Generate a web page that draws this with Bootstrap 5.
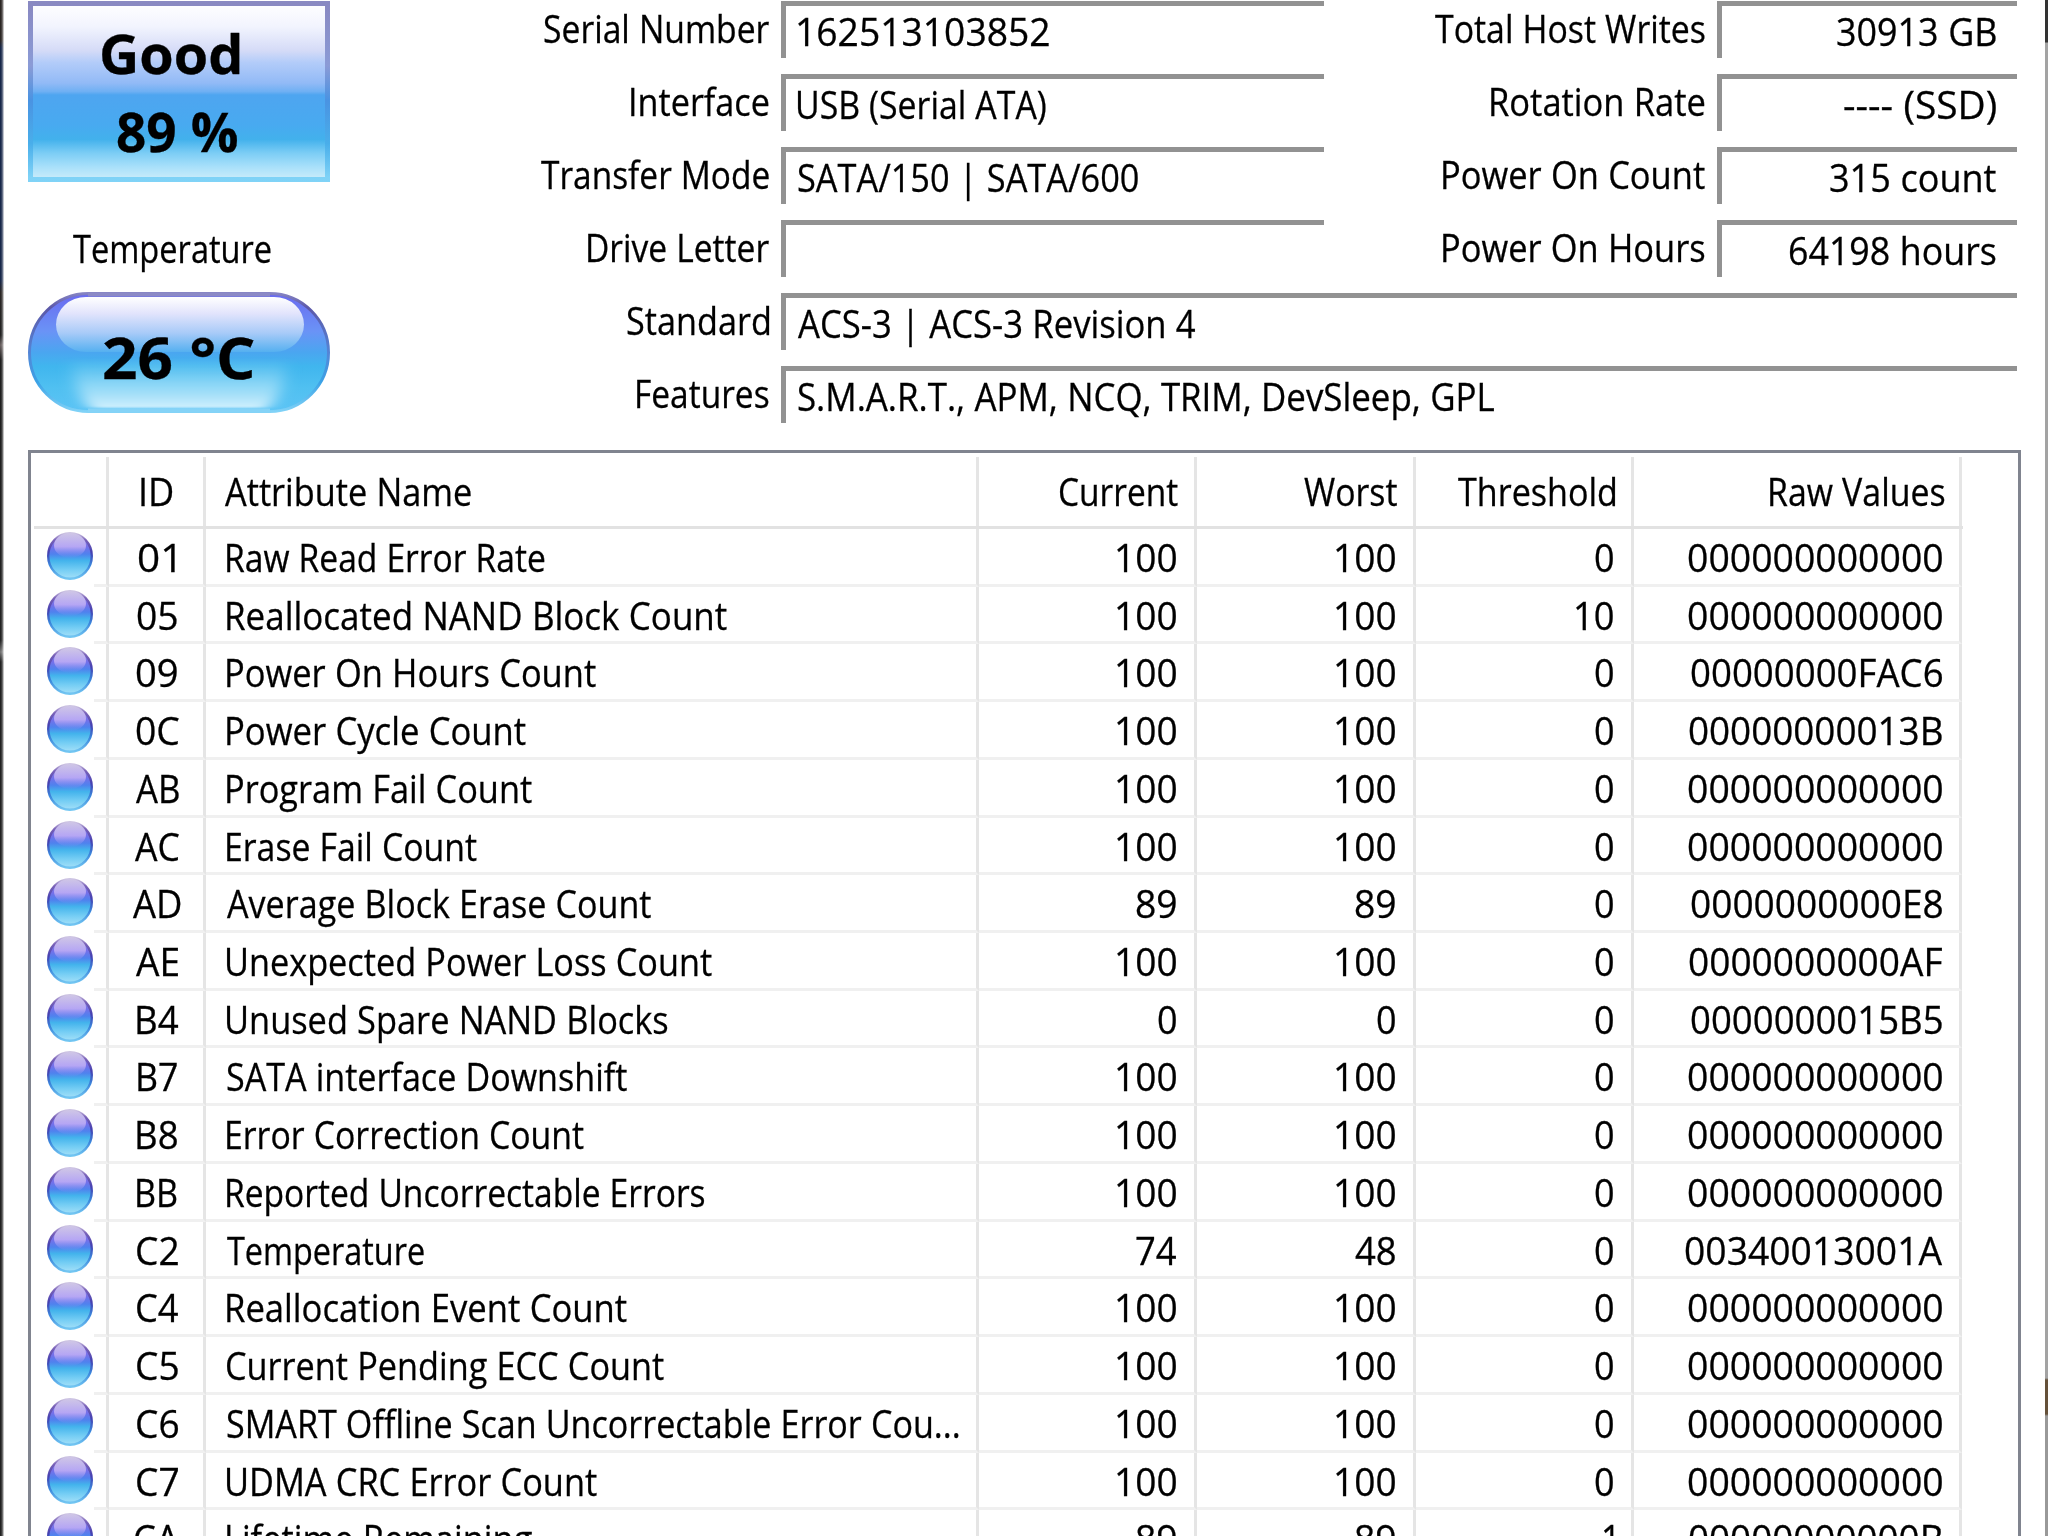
<!DOCTYPE html>
<html lang="en">
<head>
<meta charset="utf-8">
<title>Drive health</title>
<link rel="stylesheet" href="https://cdn.jsdelivr.net/npm/bootstrap@5.3.0/dist/css/bootstrap.min.css">
<style>
  html, body { height: 1536px; overflow: hidden; }
  body { width: 2048px; background: #fff; color: #000; font-family: "Open Sans", "Noto Sans", sans-serif; font-size: 38px; line-height: 55px; }
  .edge-l { width: 4px; background: linear-gradient(90deg, transparent 0 1px, rgba(255,255,255,.45) 3px, #fff 4px), linear-gradient(#2b2624 0, #2b2624 40px, #18284a 48px, #18284a 280px, #2b2726 292px, #222 335px, #6b6262 345px, #1f1f1f 360px, #222 640px, #777 652px, #222 662px); }
  .edge-r { width: 3px; background: linear-gradient(#333 0, #333 42px, #a3a3a3 43px, #a3a3a3 1378px, #65513a 1380px, #65513a 1414px, #999 1416px); }
  .txt { display: inline-block; white-space: nowrap; transform-origin: 0 50%; word-spacing: .3px; -webkit-text-stroke: .3px #000; }
  .summary { height: 450px; padding-left: 24px; }
  .status { width: 302px; }
  .health { height: 181px; margin-top: 1px; border: 5px solid; border-image: linear-gradient(#8989c2, #8b9bd6 35%, #4a93e2 55%, #49aeea 80%, #80d3f7) 1; font-size: 54px; font-weight: 700;
    background: linear-gradient(#fdfdff 0, #f2f4fe 12%, #d5dbf7 26%, #b3ccf9 33%, #92baf6 45%, #6fb0f3 50%, #4ea5f0 52%, #48aaf0 70%, #42b1ec 78%, #7ccdf5 86%, #a8e0fa 94%, #c5eafa 100%); }
  .health div { height: 79px; line-height: 79px; }
  .health div:first-child { padding: 8px 17px 0 0; }
  .health div:last-child { padding: 7px 4px 0 0; }
  .tlabel { height: 55px; margin-top: 37px; line-height: 55px; padding: 2px 14px 0 0; }
  .pill { height: 122px; margin-top: 18px; font-size: 57px; font-weight: 700; line-height: 130px; }
  .pill svg { inset: 0; }
  .info { width: 1505px; margin-left: 182px; }
  .info > div { height: 73px; }
  .cap { height: 58px; text-align: right; padding: 1px 12px 0 0; line-height: 55px; }
  .cap-a { width: 269px; }
  .cap-b { width: 393px; }
  .field { height: 57px; margin-top: 1px; border-top: 5px solid #929292; border-left: 5px solid #929292; line-height: 51px; padding: 0 21px 0 12px; }
  .field-m { width: 543px; }
  .attrs { width: 1993px; height: 1100px; margin-left: 24px; border: 3px solid #80848f; border-bottom: 0; }
  .line { height: 57.73px; width: 1932px; line-height: 56.6px; }
  .line > div, .head-line > div { flex-shrink: 0; }
  .line > div { border-right: 3px solid #e5e5e5; border-bottom: 3px solid #f0f0f0; }
  .line > .ball { border: 0; width: 63px; padding-left: 16px; line-height: 0; padding-top: 3px; }
  .head-line { height: 76px; padding-top: 4px; line-height: 68px; border-bottom: 3px solid #e2e2e2; margin-left: 3px; width: 1929px; }
  .head-line > div { border-right: 3px solid #e5e5e5; }
  .c-pad { width: 15px; }
  .head-line .c-pad { width: 75px; }
  .c-id { width: 97px; text-align: center; padding-left: 2px; }
  .c-name { width: 772.5px; padding-left: 21px; }
  .head-line .c-name { padding-left: 19px; }
  .c-num { width: 218.6px; text-align: right; padding-right: 18px; }
  .c-raw { width: 328px; text-align: right; padding-right: 17px; }
  .head-line .c-num { padding-right: 16px; }
  .head-line .c-raw { padding-right: 15px; }
</style>
<script src="https://cdn.jsdelivr.net/npm/bootstrap@5.3.0/dist/js/bootstrap.bundle.min.js"></script>
</head>
<body class="d-flex">
<svg width="0" height="0" class="position-absolute">
  <defs>
    <linearGradient id="orb" x1="0" y1="0" x2="0" y2="1"><stop offset="0" stop-color="#9c8ce0"/><stop offset=".3" stop-color="#7570ea"/><stop offset=".46" stop-color="#4f82ee"/><stop offset=".6" stop-color="#43b3ec"/><stop offset=".8" stop-color="#74cdf4"/><stop offset="1" stop-color="#a4e0f8"/></linearGradient>
    <linearGradient id="orbRim" x1="0" y1="0" x2="0" y2="1"><stop offset="0" stop-color="#cdc4e2"/><stop offset=".15" stop-color="#7a62b8"/><stop offset=".42" stop-color="#4540b0"/><stop offset=".7" stop-color="#3a86dc"/><stop offset="1" stop-color="#72c6f2"/></linearGradient>
    <linearGradient id="orbShine" x1="0" y1="0" x2="0" y2="1"><stop offset="0" stop-color="#cfc6e6"/><stop offset=".55" stop-color="#b5a6f4"/><stop offset="1" stop-color="#7f90f4" stop-opacity="0"/></linearGradient>
    <symbol id="ball" viewBox="0 0 46 48"><ellipse cx="23" cy="24" rx="21.8" ry="22.8" fill="url(#orb)" stroke="url(#orbRim)" stroke-width="2.4"/><ellipse cx="23" cy="13.500" rx="16" ry="12.500" fill="url(#orbShine)"/></symbol>
  </defs>
</svg>
<div class="edge-l flex-shrink-0"></div>
<main class="flex-grow-1 overflow-hidden">
  <section class="summary d-flex">
    <div class="status text-center">
      <div class="health"><div><span class="txt" data-w="137">Good</span></div><div><span class="txt" data-w="120">89 %</span></div></div>
      <div class="tlabel"><span class="txt" data-w="198">Temperature</span></div>
      <div class="pill position-relative">
        <svg class="position-absolute" width="302" height="122" viewBox="0 0 302 122">
          <defs>
            <linearGradient id="pb" x1="0" y1="0" x2="0" y2="1"><stop offset="0" stop-color="#6a6af0"/><stop offset=".32" stop-color="#6a93f6"/><stop offset=".5" stop-color="#4aa6f0"/><stop offset=".62" stop-color="#40b6ee"/><stop offset=".8" stop-color="#50c0f1"/><stop offset="1" stop-color="#5cc4f5"/></linearGradient>
            <linearGradient id="pr" x1="0" y1="0" x2="0" y2="1"><stop offset="0" stop-color="#8583c2"/><stop offset=".12" stop-color="#5c58a8"/><stop offset=".5" stop-color="#5485d6"/><stop offset=".75" stop-color="#3ba2e6"/><stop offset="1" stop-color="#80d2f7"/></linearGradient>
            <linearGradient id="ps" x1="0" y1="0" x2="0" y2="1"><stop offset="0" stop-color="#fff"/><stop offset=".3" stop-color="#e2e4fc"/><stop offset=".65" stop-color="#a9cbf8"/><stop offset="1" stop-color="#55b0f0"/></linearGradient>
            <linearGradient id="pg" x1="0" y1="0" x2="0" y2="1"><stop offset="0" stop-color="#90d8f6" stop-opacity="0"/><stop offset=".5" stop-color="#a0def8" stop-opacity=".7"/><stop offset="1" stop-color="#d0f0fd"/></linearGradient>
            <filter id="soft" x="-20%" y="-30%" width="140%" height="160%"><feGaussianBlur stdDeviation="8 1"/></filter>
          </defs>
          <rect x="1.5" y="1.5" width="299" height="118" rx="59" fill="url(#pb)" stroke="url(#pr)" stroke-width="3"/>
          <path d="M44 66H258C258 92 245 116 236 116H66C57 116 44 92 44 66Z" fill="url(#pg)" filter="url(#soft)"/>
          <path d="M60 2.500H242" stroke="#8c8ac6" stroke-width="4"/>
          <path d="M60 118.500H242" stroke="#85d3f7" stroke-width="4"/>
          <rect x="28" y="5" width="248" height="55" rx="30" ry="27.500" fill="url(#ps)"/>
        </svg>
        <span class="txt position-relative" data-w="150">26 °C</span>
      </div>
    </div>
    <div class="info">
      <div class="d-flex"><div class="cap cap-a"><span class="txt" data-w="225">Serial Number</span></div><div class="field field-m"><span class="txt" data-w="251">162513103852</span></div><div class="cap cap-b"><span class="txt" data-w="270">Total Host Writes</span></div><div class="field flex-grow-1 text-end"><span class="txt" data-w="159">30913 GB</span></div></div>
      <div class="d-flex"><div class="cap cap-a"><span class="txt" data-w="138">Interface</span></div><div class="field field-m"><span class="txt" data-w="248">USB (Serial ATA)</span></div><div class="cap cap-b"><span class="txt" data-w="214">Rotation Rate</span></div><div class="field flex-grow-1 text-end"><span class="txt" data-w="152">---- (SSD)</span></div></div>
      <div class="d-flex"><div class="cap cap-a"><span class="txt" data-w="228">Transfer Mode</span></div><div class="field field-m"><span class="txt" data-w="340">SATA/150 | SATA/600</span></div><div class="cap cap-b"><span class="txt" data-w="262">Power On Count</span></div><div class="field flex-grow-1 text-end"><span class="txt" data-w="166">315 count</span></div></div>
      <div class="d-flex"><div class="cap cap-a"><span class="txt" data-w="181">Drive Letter</span></div><div class="field field-m"></div><div class="cap cap-b"><span class="txt" data-w="262">Power On Hours</span></div><div class="field flex-grow-1 text-end"><span class="txt" data-w="206">64198 hours</span></div></div>
      <div class="d-flex"><div class="cap cap-a"><span class="txt" data-w="142">Standard</span></div><div class="field flex-grow-1"><span class="txt" data-w="397">ACS-3 | ACS-3 Revision 4</span></div></div>
      <div class="d-flex"><div class="cap cap-a"><span class="txt" data-w="132">Features</span></div><div class="field flex-grow-1"><span class="txt" data-w="696">S.M.A.R.T., APM, NCQ, TRIM, DevSleep, GPL</span></div></div>
    </div>
  </section>
  <section class="attrs" id="attrs">
    <div class="head-line d-flex"><div class="c-pad"></div><div class="c-id"><span class="txt" data-w="32">ID</span></div><div class="c-name"><span class="txt" data-w="246">Attribute Name</span></div><div class="c-num"><span class="txt" data-w="118">Current</span></div><div class="c-num"><span class="txt" data-w="93">Worst</span></div><div class="c-num"><span class="txt" data-w="157">Threshold</span></div><div class="c-raw"><span class="txt" data-w="175">Raw Values</span></div></div>
  </section>
</main>
<div class="edge-r flex-shrink-0"></div>
<script>
  // id, name, name width, current, worst, threshold, raw value, raw width
  const rows = [
    ["01","Raw Read Error Rate",318,100,100,0,"000000000000",254],
    ["05","Reallocated NAND Block Count",500,100,100,10,"000000000000",254],
    ["09","Power On Hours Count",369,100,100,0,"00000000FAC6",251],
    ["0C","Power Cycle Count",299,100,100,0,"00000000013B",253],
    ["AB","Program Fail Count",305,100,100,0,"000000000000",254],
    ["AC","Erase Fail Count",250,100,100,0,"000000000000",254],
    ["AD","Average Block Erase Count",424,89,89,0,"0000000000E8",251],
    ["AE","Unexpected Power Loss Count",485,100,100,0,"0000000000AF",253],
    ["B4","Unused Spare NAND Blocks",441,0,0,0,"0000000015B5",251],
    ["B7","SATA interface Downshift",400,100,100,0,"000000000000",254],
    ["B8","Error Correction Count",357,100,100,0,"000000000000",254],
    ["BB","Reported Uncorrectable Errors",478,100,100,0,"000000000000",254],
    ["C2","Temperature",197,74,48,0,"00340013001A",257],
    ["C4","Reallocation Event Count",400,100,100,0,"000000000000",254],
    ["C5","Current Pending ECC Count",437,100,100,0,"000000000000",254],
    ["C6","SMART Offline Scan Uncorrectable Error Cou...",732,100,100,0,"000000000000",254],
    ["C7","UDMA CRC Error Count",370,100,100,0,"000000000000",254],
    ["CA","Lifetime Remaining",305,89,89,1,"00000000000B",253]
  ];
  const idW = { "01":37,"05":40,"09":41,"0C":43,"AB":43,"AC":44,"AD":48,"AE":42,"B4":41,"B7":39,"B8":40,"BB":40,"C2":41,"C4":41,"C5":41,"C6":41,"C7":41,"CA":44 };
  const numW = v => ({ 1: v === 1 ? 10 : 18, 2: v === 10 ? 37 : 40, 3: 59 })[String(v).length];
  const cell = (cls, text, w) => `<div class="${cls}"><span class="txt" data-w="${w}">${text}</span></div>`;
  document.getElementById("attrs").insertAdjacentHTML("beforeend", rows.map(r =>
    `<div class="line d-flex"><div class="ball"><svg width="46" height="48"><use href="#ball"/></svg></div><div class="c-pad"></div>` +
    cell("c-id", r[0], idW[r[0]]) + cell("c-name", r[1], r[2]) + cell("c-num", r[3], numW(r[3])) +
    cell("c-num", r[4], numW(r[4])) + cell("c-num", r[5], numW(r[5])) + cell("c-raw", r[6], r[7]) + `</div>`).join(""));

  // Condense each label to its data-w width and trim the side bearings so edges line up optically
  const ctx = document.createElement("canvas").getContext("2d");
  document.querySelectorAll(".txt").forEach(el => {
    const cs = getComputedStyle(el), t = el.textContent;
    ctx.font = `${cs.fontWeight} ${cs.fontSize} ${cs.fontFamily}`;
    const m = ctx.measureText(t), lsb = -m.actualBoundingBoxLeft, rsb = m.width - m.actualBoundingBoxRight;
    const full = el.getBoundingClientRect().width;
    const s = +el.dataset.w / (full - lsb - rsb);
    el.style.transform = `scaleX(${s})`;
    el.style.marginLeft = -lsb * s + "px";
    el.style.marginRight = -rsb * s - full * (1 - s) + "px";
  });
</script>
</body>
</html>
